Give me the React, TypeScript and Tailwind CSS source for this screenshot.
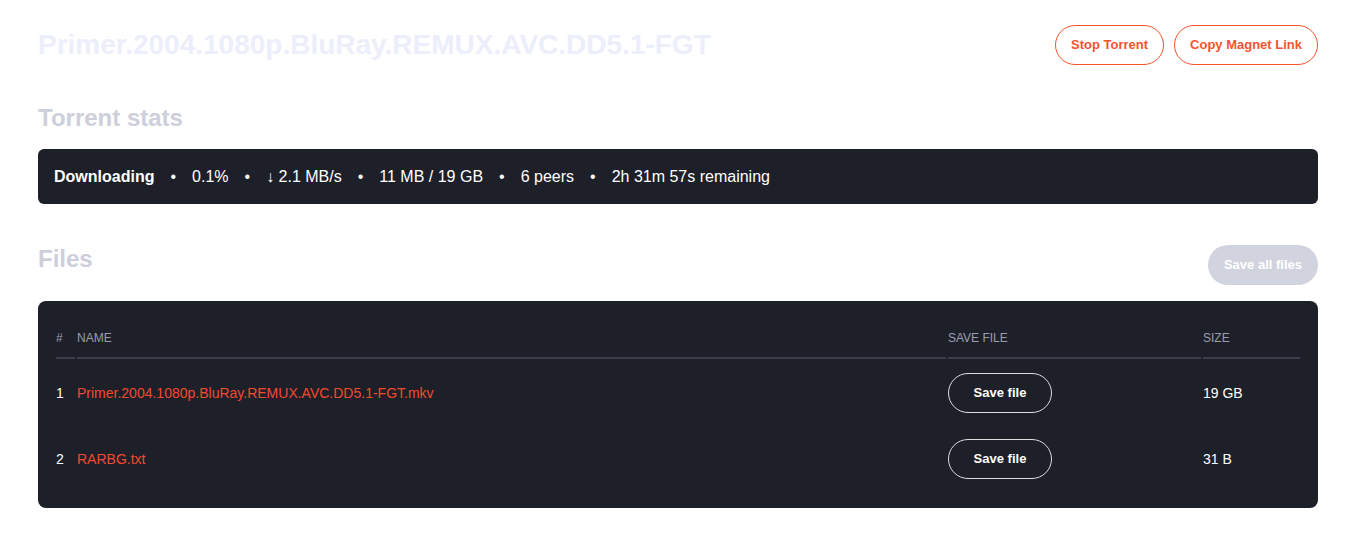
import React from "react";

const font = { fontFamily: '"Liberation Sans", Arial, sans-serif' };

function Sep() {
  return <span className="mx-4">•</span>;
}

const files = [
  { n: 1, name: "Primer.2004.1080p.BluRay.REMUX.AVC.DD5.1-FGT.mkv", size: "19 GB" },
  { n: 2, name: "RARBG.txt", size: "31 B" },
];

export default function App() {
  return (
    <div className="min-h-[546px] w-full bg-white" style={font}>
      <div className="ml-[38px] w-[1280px]">
        <div className="flex h-10 items-center justify-between pt-0 mt-[25px]">
          <h1 className="text-[28px] font-bold leading-10 text-[#eceefb]">
            Primer.2004.1080p.BluRay.REMUX.AVC.DD5.1-FGT
          </h1>
          <div className="flex gap-[10px]">
            <button className="h-10 rounded-full border border-[#f4532f] px-[15px] text-[13px] font-bold text-[#f4532f]">
              Stop Torrent
            </button>
            <button className="h-10 rounded-full border border-[#f4532f] px-[15px] text-[13px] font-bold text-[#f4532f]">
              Copy Magnet Link
            </button>
          </div>
        </div>

        <h2 className="mt-[37px] text-2xl font-bold leading-8 text-[#cdcfdb]">Torrent stats</h2>
        <div className="mt-[15px] flex h-[55px] items-center rounded-md bg-[#1e2029] px-4 text-base text-white">
          <span className="font-bold">Downloading</span>
          <Sep />
          <span>0.1%</span>
          <Sep />
          <span>↓ 2.1 MB/s</span>
          <Sep />
          <span>11 MB / 19 GB</span>
          <Sep />
          <span>6 peers</span>
          <Sep />
          <span>2h 31m 57s remaining</span>
        </div>

        <div className="mt-[38px] flex items-start justify-between">
          <h2 className="mt-[1px] text-2xl font-bold leading-8 text-[#cdcfdb]">Files</h2>
          <button className="mt-[3px] h-10 rounded-full bg-[#d1d3de] px-4 text-[13px] font-bold text-white">
            Save all files
          </button>
        </div>

        <div className="mt-[16px] rounded-lg bg-[#1e2029] px-[18px] pt-[18px] pb-[16px]">
          <div className="grid grid-cols-[19px_869px_253px_1fr] gap-x-[2px] text-xs uppercase text-[#9a9db0]">
            <div className="flex h-[40px] items-center border-b-2 border-[#3b3d4c]">#</div>
            <div className="flex h-[40px] items-center border-b-2 border-[#3b3d4c]">Name</div>
            <div className="flex h-[40px] items-center border-b-2 border-[#3b3d4c]">Save file</div>
            <div className="flex h-[40px] items-center border-b-2 border-[#3b3d4c]">Size</div>
          </div>
          <div className="pt-[1px]">
            {files.map((f) => (
              <div
                key={f.n}
                className="grid h-[66px] grid-cols-[19px_869px_253px_1fr] items-center gap-x-[2px] text-sm text-white"
              >
                <div>{f.n}</div>
                <div className="text-[#f24a2d]">{f.name}</div>
                <div>
                  <button className="flex h-10 w-[104px] items-center justify-center rounded-full border border-[#dcdcdc] text-[13px] font-bold text-white">
                    Save file
                  </button>
                </div>
                <div>{f.size}</div>
              </div>
            ))}
          </div>
        </div>
      </div>
    </div>
  );
}
